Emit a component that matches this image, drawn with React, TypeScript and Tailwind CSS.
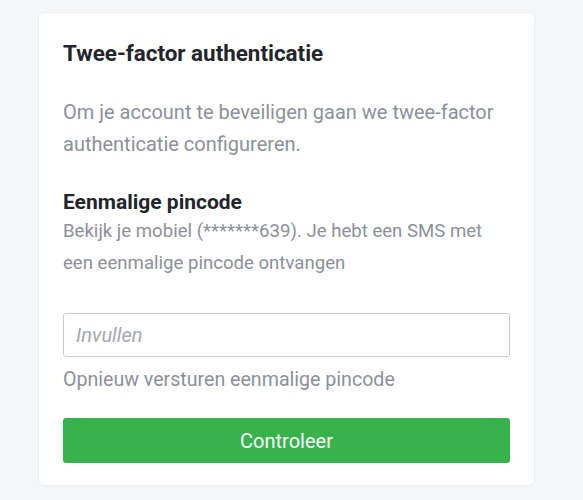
export default function App() {
  return (
    <div className="min-h-[500px] bg-[#f5f6f8] pt-3 pl-[38px] font-['Roboto',sans-serif]">
      <div className="flex w-[497px] flex-col rounded-md border border-[#eceef1] bg-white px-6 pt-[25px] pb-[22px]">
        <h1 className="text-[22.4px] leading-[30px] font-bold text-[#222529]">Twee-factor authenticatie</h1>
        <p className="mt-7 text-[20px] leading-8 text-[#8c9199]">
          Om je account te beveiligen gaan we twee-factor authenticatie configureren.
        </p>
        <h2 className="mt-[29px] text-[21px] leading-[26px] font-bold text-[#222529]">Eenmalige pincode</h2>
        <p className="text-[18.6px] leading-8 text-[#8c9199]">
          Bekijk je mobiel (*******639). Je hebt een SMS met een eenmalige pincode ontvangen
        </p>
        <input
          placeholder="Invullen"
          className="mt-[34px] h-11 w-full rounded-[3px] border border-[#c8cbd0] px-3 text-[20px] placeholder:italic placeholder:text-[#a4a9b0] focus:outline-none"
        />
        <p className="mt-[7px] text-[19.6px] leading-8 text-[#8c9199]">Opnieuw versturen eenmalige pincode</p>
        <button className="mt-[22px] h-[45px] w-full rounded-[3px] bg-[#37b24d] text-[20px] text-white">Controleer</button>
      </div>
    </div>
  )
}
